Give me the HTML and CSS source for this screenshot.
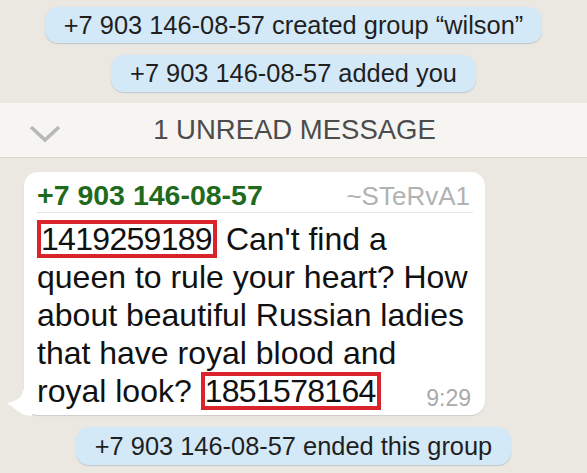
FILE: index.html
```html
<!DOCTYPE html>
<html>
<head>
<meta charset="utf-8">
<link rel="stylesheet" href="styles.css">
</head>
<body>
<div class="chat">
  <div class="sys pill-1">+7 903 146-08-57 created group “wilson”</div>
  <div class="sys pill-2">+7 903 146-08-57 added you</div>
  <div class="unread">
    <svg class="chev" width="34" height="22" viewBox="0 0 34 22"><polyline points="3,4 17,17 31,4" fill="none" stroke="#b8b8b8" stroke-width="3.6"/></svg>
    <span class="unread-text">1 UNREAD MESSAGE</span>
  </div>
  <div class="bubble">
    <svg class="tail" width="26" height="26" viewBox="0 0 26 26"><path d="M17 0 C17 6 12 11 1 13 C5 15 10 21 19 25 L26 26 L26 0 Z" fill="#ffffff"/></svg>
    <div class="head">
      <span class="sender">+7 903 146-08-57</span>
      <span class="nick">~STeRvA1</span>
    </div>
    <div class="text"><span class="num">1419259189</span> Can't find a<br>queen to rule your heart? How<br>about beautiful Russian ladies<br>that have royal blood and<br>royal look? <span class="num">1851578164</span></div>
    <span class="time">9:29</span>
  </div>
  <div class="sys pill-3">+7 903 146-08-57 ended this group</div>
</div>
</body>
</html>
```
FILE: styles.css
```css
html, body {
  margin: 0;
  padding: 0;
}
body {
  background: #ebe7e1;
  font-family: "Liberation Sans", Arial, sans-serif;
  width: 587px;
  height: 473px;
  overflow: hidden;
}
.chat {
  display: flex;
  flex-direction: column;
  align-items: center;
  padding-top: 7px;
}
.sys {
  background: #d4e9f8;
  color: #1f1f1f;
  font-size: 25.4px;
  border-radius: 13px;
  padding: 0 19px;
  box-shadow: 0 1px 1px rgba(120, 140, 160, 0.35);
  white-space: nowrap;
}
.pill-1 {
  height: 36px;
  line-height: 37px;
}
.pill-2 {
  margin-top: 12px;
  height: 37px;
  line-height: 37px;
}
.unread {
  margin-top: 11px;
  align-self: stretch;
  height: 54px;
  background: #f6f5f2;
  border-bottom: 1px solid #d8d4ce;
  display: flex;
  align-items: center;
  justify-content: center;
  position: relative;
}
.chev {
  position: absolute;
  left: 28px;
  top: 20px;
}
.unread-text {
  font-size: 27.5px;
  color: #4c4c4c;
  margin-left: 2px;
}
.bubble {
  align-self: flex-start;
  margin-left: 24px;
  margin-top: 14px;
  width: 461px;
  box-sizing: border-box;
  background: #ffffff;
  border-radius: 14px;
  padding: 7px 12px 5px 13px;
  position: relative;
  box-shadow: 0 1px 1px rgba(0, 0, 0, 0.12);
}
.tail {
  position: absolute;
  left: -18px;
  bottom: -1px;
}
.head {
  display: flex;
  justify-content: space-between;
  align-items: baseline;
  height: 33px;
  line-height: 33px;
  border-bottom: 1px solid #e6e6e6;
}
.sender {
  font-weight: bold;
  font-size: 28.5px;
  color: #1f6a1c;
}
.nick {
  font-size: 26px;
  color: #b2b2b2;
  margin-right: 3px;
}
.text {
  margin-top: 7px;
  font-size: 32px;
  line-height: 38px;
  color: #111111;
  white-space: nowrap;
}
.num {
  display: inline-block;
  border: 4px solid #d9242b;
  line-height: 30px;
  letter-spacing: -0.7px;
  padding-right: 1px;
}
.time {
  position: absolute;
  right: 14px;
  bottom: 5px;
  font-size: 23px;
  line-height: 23px;
  color: #aaaaaa;
}
.pill-3 {
  margin-top: 12px;
  height: 38px;
  line-height: 39px;
}
```
